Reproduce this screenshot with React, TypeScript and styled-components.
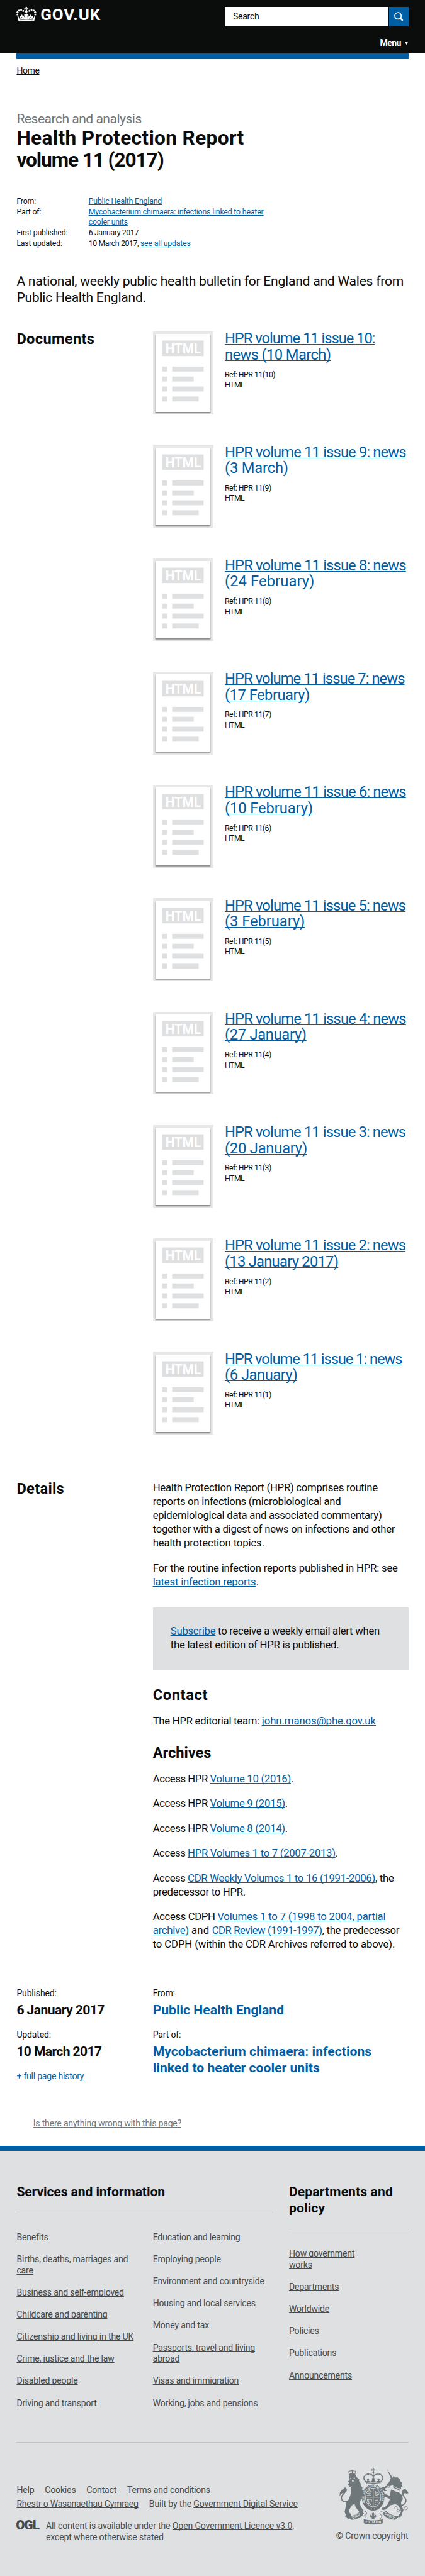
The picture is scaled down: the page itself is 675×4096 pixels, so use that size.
import React from "react";
import styled, { createGlobalStyle, css } from "styled-components";

const colour = {
  ink: "#0b0c0c",
  link: "#005ea5",
  secondary: "#6f777b",
  panel: "#dee0e2",
  footerText: "#454a4c",
  rule: "#bfc1c3",
};

/* 1rem is ten design units */
const GlobalStyle = createGlobalStyle`
  *, *::before, *::after { box-sizing: border-box; }
  html { font-size: 8.793px; }
  body { margin: 0; background: #fff; color: ${colour.ink}; font-family: Roboto, "Liberation Sans", sans-serif; overflow-x: hidden; }
  h1, h2, h3, p, ul, dl, dd, dt { margin: 0; padding: 0; font-weight: 400; }
  ul { list-style: none; }
`;

const type = (size: number, line: number, weight = 400, tracking = 0) => css`
  font-size: ${size}rem;
  line-height: ${line}rem;
  font-weight: ${weight};
  letter-spacing: ${tracking}em;
  white-space: nowrap;
`;

const Page = styled.div`
  min-height: 100vh;
  display: flex;
  flex-direction: column;
`;

const Link = styled.a<{ $tone?: string; $tracking?: number }>`
  color: ${(p) => p.$tone ?? colour.link};
  letter-spacing: ${(p) => (p.$tracking === undefined ? "inherit" : `${p.$tracking}em`)};
  text-decoration: underline;
  text-decoration-thickness: 1px;
  text-underline-offset: 1px;
  text-decoration-skip-ink: none;
`;

const Tracked = styled.span<{ $tracking: number }>`
  letter-spacing: ${(p) => p.$tracking}em;
`;

/* ---------- header ---------- */

const Header = styled.header`
  height: 9.7rem;
  padding: 1.2rem 3rem 0;
  background: ${colour.ink};
  color: #fff;
`;
const HeaderRow = styled.div`
  display: flex;
  justify-content: space-between;
  align-items: flex-start;
`;
const Logo = styled.div`
  display: flex;
  gap: 0.7rem;
  font-size: 2.95rem;
  line-height: 2.6rem;
  font-weight: 700;
  letter-spacing: 0.035em;
  svg { width: 3.6rem; height: 2.6rem; }
  span { margin-top: 0.18rem; }
`;
const Search = styled.form`
  display: flex;
  gap: 0.1rem;
`;
const SearchField = styled.div`
  ${type(1.6, 3.6, 400, -0.0172)}
  width: 29.6rem;
  padding-left: 1.5rem;
  background: #fff;
  color: ${colour.ink};
`;
const SearchButton = styled.button`
  width: 3.5rem;
  height: 3.6rem;
  padding: 0;
  border: 0;
  background: ${colour.link};
  display: grid;
  place-items: center;
  svg { width: 1.7rem; height: 1.7rem; }
`;
const MenuToggle = styled.div`
  ${type(1.6, 2, 700, -0.04)}
  margin-top: 2.02rem;
  display: flex;
  justify-content: flex-end;
  align-items: center;
  gap: 0.75rem;
  svg { width: 0.6rem; height: 0.6rem; }
`;

/* ---------- main ---------- */

const Main = styled.main`
  padding: 0 3rem;
`;
const BlueBar = styled.div`
  height: 1rem;
  background: ${colour.link};
`;
const Breadcrumb = styled.nav`
  ${type(1.6, 2, 400, -0.03)}
  margin-top: 1.13rem;
`;
const Context = styled.p`
  ${type(2.4, 3, 400, -0.0248)}
  margin-top: 6.23rem;
  color: ${colour.secondary};
`;
const Title = styled.h1`
  ${type(3.6, 3.9, 700, 0.0105)}
  padding-top: 0.06rem;
`;
const Meta = styled.dl`
  ${type(1.4, 1.9, 400, -0.0133)}
  margin-top: 4.57rem;
  display: grid;
  grid-template-columns: 13rem 1fr;
`;
const Lead = styled.p`
  ${type(2.4, 3, 400, -0.012)}
  margin-top: 4.34rem;
`;
const Section = styled.section<{ $gap: number }>`
  margin-top: ${(p) => p.$gap}rem;
  display: grid;
  grid-template-columns: 21.6rem 46.2rem;
  column-gap: 3rem;
`;
const SectionHeading = styled.h2`
  ${type(2.7, 2.5, 700, 0.012)}
  padding-top: 0.06rem;
`;
const DocumentList = styled.ul`
  display: flex;
  flex-direction: column;
  gap: 5.5rem;
`;
const DocumentItem = styled.li`
  height: 15rem;
  display: flex;
  gap: 2.1rem;
`;
const Thumbnail = styled.div`
  flex: none;
  width: 10.9rem;
  height: 15rem;
  padding: 0.5rem;
  background: #e7e7e7;
  svg {
    display: block;
    width: 9.9rem;
    height: 14rem;
    background: #fff;
    box-shadow: 0 0.2rem 0.2rem rgba(0, 0, 0, 0.4);
  }
`;
const DocumentTitle = styled.h3`
  ${type(2.7, 2.9)}
  margin-top: -0.07rem;
`;
const DocumentMeta = styled.p`
  ${type(1.4, 1.9, 400, -0.041)}
  margin-top: 1.15rem;
`;
const Prose = styled.div`
  p { ${type(1.9, 2.5, 400, -0.0155)} }
  p + p { margin-top: 2rem; }
`;
const ProseHeading = styled.h3<{ $tracking: number }>`
  ${type(2.7, 3, 700)}
  margin: 2.99rem 0 1.97rem;
  letter-spacing: ${(p) => p.$tracking}em;
`;
const CallToAction = styled.div`
  height: 11.4rem;
  margin-top: 3.25rem;
  padding: 3.12rem 3.2rem 0;
  background: ${colour.panel};
`;
const Facts = styled.div`
  margin-top: 6.58rem;
  display: grid;
  grid-template-columns: 21.6rem 46.2rem;
  column-gap: 3rem;
`;
const FactColumn = styled.div`
  display: flex;
  flex-direction: column;
  gap: 2.07rem;
`;
const FactLabel = styled.p`
  ${type(1.6, 2, 400, -0.012)}
`;
const FactValue = styled.p<{ $linked?: boolean; $tracking?: number }>`
  ${type(2.4, 3, 700)}
  margin-top: 0.43rem;
  letter-spacing: ${(p) => p.$tracking ?? 0}em;
  color: ${(p) => (p.$linked ? colour.link : colour.ink)};
`;
const Report = styled.p`
  ${type(1.6, 2, 400, -0.0139)}
  margin: 6.5rem 0 3.03rem 3rem;
`;

/* ---------- footer ---------- */

const Footer = styled.footer`
  flex: 1;
  padding: 5.9rem 3rem 0;
  border-top: 1rem solid ${colour.link};
  background: ${colour.panel};
  color: ${colour.footerText};
`;
const FooterNav = styled.div`
  display: grid;
  grid-template-columns: 46.2rem 21.6rem;
  column-gap: 3rem;
  padding-bottom: 6.05rem;
  border-bottom: 1px solid ${colour.rule};
`;
const FooterHeading = styled.h2<{ $tracking: number }>`
  ${type(2.4, 3, 700)}
  letter-spacing: ${(p) => p.$tracking}em;
  padding-bottom: 2.15rem;
  border-bottom: 1px solid ${colour.rule};
  color: ${colour.ink};
`;
const FooterColumns = styled.div`
  margin-top: 3.48rem;
  display: grid;
  grid-template-columns: 21.6rem 21.6rem;
  column-gap: 3rem;
`;
const FooterList = styled.ul`
  ${type(1.6, 2, 400, -0.0122)}
  display: flex;
  flex-direction: column;
  gap: 2rem;
`;
const FooterBottom = styled.div`
  margin-top: 4.52rem;
  display: flex;
  justify-content: space-between;
`;
const Legal = styled.div`
  padding-top: 2.88rem;
`;
const LegalLinks = styled.div<{ $gap: number }>`
  ${type(1.6, 2.4, 400, -0.0115)}
  display: flex;
  gap: ${(p) => p.$gap}rem;
`;
const Licence = styled.div`
  ${type(1.6, 2, 400, -0.0096)}
  margin-top: 1.86rem;
  display: flex;
  gap: 1.2rem;
  svg { width: 4.1rem; height: 1.8rem; overflow: visible; }
`;
const Copyright = styled.div`
  ${type(1.6, 2, 400, -0.0062)}
  display: flex;
  flex-direction: column;
  align-items: flex-end;
  gap: 1.18rem;
  svg { width: 12.5rem; height: 10.2rem; overflow: visible; }
`;

/* ---------- drawings ---------- */

const crownPearls = [[1.9, 13.6], [2.1, 9.4], [4.7, 6.5], [8.6, 5.4], [12.4, 7.2]];

const Crown = () => (
  <svg viewBox="0 0 36 26" fill="#fff">
    {crownPearls.map(([x, y]) => (
      <React.Fragment key={y}>
        <circle cx={x} cy={y} r="1.75" />
        <circle cx={36 - x} cy={y} r="1.75" />
      </React.Fragment>
    ))}
    <path d="M16.6 0h2.8l-.5 2.7 2.7-.6v2.9l-2.7-.5.5 2.2h-2.8l.5-2.2-2.7.5V2.1l2.7.6z" />
    <circle cx="18" cy="8.6" r="2.2" />
    <path d="M1.6 16l2.4 1.5 1.6 4.4h24.8l1.6-4.4 2.4-1.5-2.4 10H4z" />
    <path d="M18 10.5l1.5 3.2 2.3-1.2v3.5l-2.1-.5.8 4.3 2.6-4.1 1 1.9 1.9-4.4 1.7 3.9 2.3-1.6-1.1 7.8H7.1L6 15.5l2.3 1.6L10 13.2l1.9 4.4 1-1.9 2.6 4.1.8-4.3-2.1.5v-3.5l2.3 1.2z" />
    <path d="M6.4 23.7q11.6-1.8 23.2 0" stroke={colour.ink} strokeWidth=".6" fill="none" />
    <path d="M7.6 21l2.3-2.4 2.3 2.4M23.8 21l2.3-2.4 2.3 2.4M15 21l1.4-1.2h3.2l1.4 1.2" stroke={colour.ink} strokeWidth=".9" fill="none" />
  </svg>
);

const SearchGlyph = () => (
  <svg viewBox="0 0 17 17" fill="none" stroke="#fff">
    <circle cx="7" cy="7" r="5.9" strokeWidth="1.9" />
    <path d="M11 11.2l4.6 4.6" strokeWidth="2.8" />
  </svg>
);

const HtmlPage = () => (
  <svg viewBox="0 0 99 140" fill={colour.panel}>
    <rect x="12" y="12" width="75" height="28" />
    <text x="18" y="34.8" fill="#fff" fontFamily="Roboto, sans-serif" fontSize="24.5" fontWeight="700" textLength="64" lengthAdjust="spacingAndGlyphs">
      HTML
    </text>
    {[57, 39, 57, 48].map((w, i) => (
      <React.Fragment key={i}>
        <rect x="12" y={59 + i * 18} width="9" height="9" />
        <rect x="30" y={59 + i * 18} width={w} height="9" />
      </React.Fragment>
    ))}
  </svg>
);

const Crest = () => (
  <svg viewBox="15 24 375 306" fill={colour.secondary} fontFamily="Roboto, sans-serif" fontWeight="700">
    {/* lion */}
    <path d="M70 61l-4-13q-2-7 8-6l11-5 11 5q9-1 7 6l-4 13z" fill="none" stroke={colour.secondary} strokeWidth="5" strokeDasharray="5 1.5" />
    <path d="M83 36h4v24h-4zM71 54h28v7H71z" />
    <path d="M68 66l34-4 8 14 14 12-3 8 12 16-5 5 13 15-4 6 8 14-3 15 8 12-10 14-8 2-8 21 10 22 10 16-4 9 5 10-10-2-9 5-5-15-18-24-6-18-13 8-14 21-2 17 10 11 2 13 8 9-9 4-8-3-10 4-6-11-9-4 4-10-7-14 5-21 3-28 16-22 12-34-2-27 5-9-10 4-8-4 6-5-8-2 5-12-5-7 9-8z" />
    <path d="M73 78l8 3-6 4zM91 80l9-3-2 8zM83 93l12-4-3 9-7 2z" fill={colour.panel} />
    <path d="M59 205c-16 10-36-2-32-24 3-18 25-20 23-38" fill="none" stroke={colour.secondary} strokeWidth="6" />
    <path d="M46 130l10 8-2 14-12 8-14 3-12 14 2-20 10-13z" />
    {/* unicorn */}
    <path d="M273 31l31 48-8 7z" />
    <path d="M292 84l13-7 3-10 7 9 16 0 13 11 1 9 10 10-4 7 6 12-8 3 1 12-10-6 2 16-12-8-22-10-4-14-14 5-14-1-3-9 12-12z" />
    <path d="M296 141l42 17 17 14 4 22-10 18 4 20 9 20-6 18-6 17-11 6-2-12 11-15 1-12-14-25-17-8-25 6-25 22-15 4-11-3 5-9 15-3 17-19 10-26-19-9-19-2-17-15 1-9 19-4 8 12 25 9z" />
    <path d="M269 121l-10 7-14-1-5 9 19 15 13-2-12-11 13-8z" />
    <path d="M352 228c27-9 30-29 16-44-16-17-9-38 7-44" fill="none" stroke={colour.secondary} strokeWidth="6" />
    <path d="M364 138l-8 12 2 22 12-12 8 4 12-3-10-16z" />
    <path d="M298 116q22 20 52 23M292 134q22 20 50 22" stroke={colour.panel} strokeWidth="3" fill="none" />
    <g fill="none" stroke={colour.secondary} strokeWidth="3">
      <circle cx="281" cy="125" r="6" />
      <circle cx="322" cy="241" r="7" />
      <circle cx="334" cy="256" r="7" />
      <circle cx="354" cy="255" r="6" />
      <circle cx="375" cy="243" r="9" />
    </g>
    {/* crown */}
    <path d="M195 25h8l-2 8 8-2v9l-8-2 3 13h-10l3-13-8 2v-9l8 2z" />
    <path d="M160 101C132 72 160 45 195 65q4 5 8 0C238 45 266 72 238 101" fill="none" stroke={colour.secondary} strokeWidth="7" strokeDasharray="6 1.5" />
    <path d="M199 53v46" stroke={colour.secondary} strokeWidth="5" strokeDasharray="5 2" />
    <path d="M159 101l8-7-3-8 7-6 6 7-3 8 11 4 9-8-3-8 8-8 8 8-3 8 9 8 11-4-3-8 6-7 7 6-3 8 8 7-2 12q-37-8-77 0z" />
    <path d="M164 107q35-8 70 0" fill="none" stroke={colour.panel} strokeWidth="2.5" />
    {/* garter and shield */}
    <ellipse cx="198" cy="185" rx="61" ry="71" />
    <ellipse cx="198" cy="185" rx="42" ry="51" fill="none" stroke={colour.panel} strokeWidth="3" />
    <path d="M158 183h80M198 135v100" stroke={colour.panel} strokeWidth="4" />
    <g fill="none" stroke={colour.panel} strokeWidth="3">
      <path d="M168 153l8-4 14 3M164 163l13-2 12 4M164 174l12-3 13 4" />
      <path d="M207 202l12-4 9 5M207 213l10-4 10 5M207 224l12-4" />
      <path d="M209 151l6 10 10-4 4 11-8 6-11-4zM211 175l14-8" />
      <path d="M166 194l4 20 16 11 4-29zM172 196l4 22M180 196l1 24" />
    </g>
    <path id="garter" d="M157 212a47 56 0 1 1 82 0" fill="none" />
    <text fontSize="16" fill={colour.panel}>
      <textPath href="#garter">HONI SOIT QUI MAL Y PENSE</textPath>
    </text>
    <circle cx="189" cy="247" r="3" fill={colour.panel} />
    <circle cx="206" cy="247" r="3" fill={colour.panel} />
    {/* fleur-de-lis and motto scroll */}
    <path d="M198 263l7 12-3 10 9-7 5 9-8 7-5-2 4 11h-18l4-11-5 2-8-7 5-9 9 7-3-10z" />
    <path d="M60 287q42 0 72-31l17 16q-21 30-69 34z" />
    <path d="M338 287q-42 0-72-31l-17 16q21 30 69 34z" />
    <path d="M147 303q51 13 103 0v22q-51 13-103 0z" />
    <path d="M133 257q28-2 31 14 0 10-13 11 3 13 12 20M265 257q-28-2-31 14 0 10 13 11-3 13-12 20" fill="none" stroke={colour.secondary} strokeWidth="3" />
    <g fontSize="19" fill={colour.panel}>
      <text transform="translate(88 301) rotate(-27)" textLength="45">DIEU</text>
      <text x="157" y="325" textLength="84">ET MON</text>
      <text transform="translate(258 276) rotate(28)" textLength="58">DROIT</text>
    </g>
  </svg>
);

/* ---------- content ---------- */

type Line = [text: string, tracking: number];

const documents: { ref: number; lines: Line[] }[] = [
  { ref: 10, lines: [["HPR volume 11 issue 10:", -0.0435], ["news (10 March)", -0.0255]] },
  { ref: 9, lines: [["HPR volume 11 issue 9: news", -0.0355], ["(3 March)", -0.0075]] },
  { ref: 8, lines: [["HPR volume 11 issue 8: news", -0.0355], ["(24 February)", 0.004]] },
  { ref: 7, lines: [["HPR volume 11 issue 7: news", -0.039], ["(17 February)", -0.021]] },
  { ref: 6, lines: [["HPR volume 11 issue 6: news", -0.0355], ["(10 February)", -0.004]] },
  { ref: 5, lines: [["HPR volume 11 issue 5: news", -0.0365], ["(3 February)", -0.002]] },
  { ref: 4, lines: [["HPR volume 11 issue 4: news", -0.0355], ["(27 January)", -0.013]] },
  { ref: 3, lines: [["HPR volume 11 issue 3: news", -0.0365], ["(20 January)", -0.009]] },
  { ref: 2, lines: [["HPR volume 11 issue 2: news", -0.0365], ["(13 January 2017)", -0.031]] },
  { ref: 1, lines: [["HPR volume 11 issue 1: news", -0.0455], ["(6 January)", -0.0189]] },
];

const services = [
  [
    ["Benefits"],
    ["Births, deaths, marriages and", "care"],
    ["Business and self-employed"],
    ["Childcare and parenting"],
    ["Citizenship and living in the UK"],
    ["Crime, justice and the law"],
    ["Disabled people"],
    ["Driving and transport"],
  ],
  [
    ["Education and learning"],
    ["Employing people"],
    ["Environment and countryside"],
    ["Housing and local services"],
    ["Money and tax"],
    ["Passports, travel and living", "abroad"],
    ["Visas and immigration"],
    ["Working, jobs and pensions"],
  ],
];

const departments = [
  ["How government", "works"],
  ["Departments"],
  ["Worldwide"],
  ["Policies"],
  ["Publications"],
  ["Announcements"],
];

const LinkList = ({ items }: { items: string[][] }) => (
  <FooterList>
    {items.map((lines) => (
      <li key={lines[0]}>
        <Link $tone={colour.footerText}>
          {lines[0]}
          {lines[1] && <><br />{lines[1]}</>}
        </Link>
      </li>
    ))}
  </FooterList>
);

export default function App() {
  return (
    <Page>
      <GlobalStyle />
      <Header>
        <HeaderRow>
          <Logo><Crown /><span>GOV.UK</span></Logo>
          <Search>
            <SearchField>Search</SearchField>
            <SearchButton type="button" aria-label="Search"><SearchGlyph /></SearchButton>
          </Search>
        </HeaderRow>
        <MenuToggle>
          Menu
          <svg viewBox="0 0 6 6" fill="#fff"><path d="M0 0h6L3 6z" /></svg>
        </MenuToggle>
      </Header>

      <Main>
        <BlueBar />
        <Breadcrumb><Link $tone={colour.ink}>Home</Link></Breadcrumb>
        <Context>Research and analysis</Context>
        <Title>
          Health Protection Report<br />
          <Tracked $tracking={-0.035}>volume 11 (2017)</Tracked>
        </Title>
        <Meta>
          <dt>From:</dt>
          <dd><Link>Public Health England</Link></dd>
          <dt>Part of:</dt>
          <dd><Link>Mycobacterium chimaera: infections linked to heater<br />cooler units</Link></dd>
          <dt>First published:</dt>
          <dd><Tracked $tracking={-0.03}>6 January 2017</Tracked></dd>
          <dt>Last updated:</dt>
          <dd><Tracked $tracking={-0.03}>10 March 2017, </Tracked><Link>see all updates</Link></dd>
        </Meta>
        <Lead>
          A national, weekly public health bulletin for England and Wales from<br />
          Public Health England.
        </Lead>

        <Section $gap={4.62}>
          <SectionHeading>Documents</SectionHeading>
          <DocumentList>
            {documents.map(({ ref, lines: [first, second] }) => (
              <DocumentItem key={ref}>
                <Thumbnail><HtmlPage /></Thumbnail>
                <div>
                  <DocumentTitle>
                    <Link $tracking={first[1]}>{first[0]}</Link><br />
                    <Link $tracking={second[1]}>{second[0]}</Link>
                  </DocumentTitle>
                  <DocumentMeta>Ref: HPR 11({ref})<br />HTML</DocumentMeta>
                </div>
              </DocumentItem>
            ))}
          </DocumentList>
        </Section>

        <Section $gap={8.45}>
          <SectionHeading>Details</SectionHeading>
          <Prose>
            <p>
              Health Protection Report (HPR) comprises routine<br />
              reports on infections (microbiological and<br />
              epidemiological data and associated commentary)<br />
              together with a digest of news on infections and other<br />
              <Tracked $tracking={-0.006}>health protection topics.</Tracked>
            </p>
            <p>
              <Tracked $tracking={-0.011}>For the routine infection reports published in HPR: see</Tracked><br />
              <Link $tracking={-0.01}>latest infection reports</Link>.
            </p>
            <CallToAction>
              <p>
                <Link>Subscribe</Link> to receive a weekly email alert when<br />
                the latest edition of HPR is published.
              </p>
            </CallToAction>
            <ProseHeading $tracking={0.024}>Contact</ProseHeading>
            <p>The HPR editorial team: <Link $tracking={-0.003}>john.manos@phe.gov.uk</Link></p>
            <ProseHeading $tracking={-0.003}>Archives</ProseHeading>
            <p><Tracked $tracking={-0.025}>Access HPR </Tracked><Link>Volume 10 (2016)</Link>.</p>
            <p><Tracked $tracking={-0.025}>Access HPR </Tracked><Link>Volume 9 (2015)</Link>.</p>
            <p><Tracked $tracking={-0.025}>Access HPR </Tracked><Link>Volume 8 (2014)</Link>.</p>
            <p><Tracked $tracking={-0.027}>Access </Tracked><Link $tracking={-0.0173}>HPR Volumes 1 to 7 (2007-2013)</Link>.</p>
            <p>
              <Tracked $tracking={-0.027}>Access </Tracked>
              <Link $tracking={-0.0173}>CDR Weekly Volumes 1 to 16 (1991-2006)</Link>, the<br />
              predecessor to HPR.
            </p>
            <p>
              <Tracked $tracking={-0.022}>Access CDPH </Tracked>
              <Link $tracking={-0.0105}>Volumes 1 to 7 (1998 to 2004, partial</Link><br />
              <Link>archive)</Link><Tracked $tracking={0.01}> and </Tracked>
              <Link $tracking={-0.025}>CDR Review (1991-1997)</Link>, the predecessor<br />
              <Tracked $tracking={-0.006}>to CDPH (within the CDR Archives referred to above).</Tracked>
            </p>
          </Prose>
        </Section>

        <Facts>
          <FactColumn>
            <div>
              <FactLabel>Published:</FactLabel>
              <FactValue $tracking={-0.0272}>6 January 2017</FactValue>
            </div>
            <div>
              <FactLabel>Updated:</FactLabel>
              <FactValue $tracking={-0.03}>10 March 2017</FactValue>
            </div>
            <FactLabel><Link $tracking={-0.016}>+ full page history</Link></FactLabel>
          </FactColumn>
          <FactColumn>
            <div>
              <FactLabel>From:</FactLabel>
              <FactValue $linked>Public Health England</FactValue>
            </div>
            <div>
              <FactLabel>Part of:</FactLabel>
              <FactValue $linked $tracking={0.001}>Mycobacterium chimaera: infections<br />linked to heater cooler units</FactValue>
            </div>
          </FactColumn>
        </Facts>
        <Report><Link $tone={colour.secondary}>Is there anything wrong with this page?</Link></Report>
      </Main>

      <Footer>
        <FooterNav>
          <div>
            <FooterHeading $tracking={-0.0045}>Services and information</FooterHeading>
            <FooterColumns>
              {services.map((items) => <LinkList key={items[0][0]} items={items} />)}
            </FooterColumns>
          </div>
          <div>
            <FooterHeading $tracking={0.005}>Departments and<br />policy</FooterHeading>
            <FooterColumns><LinkList items={departments} /></FooterColumns>
          </div>
        </FooterNav>
        <FooterBottom>
          <Legal>
            <LegalLinks $gap={1.9}>
              {["Help", "Cookies", "Contact", "Terms and conditions"].map((label) => (
                <Link key={label} $tone={colour.footerText}>{label}</Link>
              ))}
            </LegalLinks>
            <LegalLinks $gap={1.95}>
              <Link $tone={colour.footerText} $tracking={-0.0165}>Rhestr o Wasanaethau Cymraeg</Link>
              <span>Built by the <Link $tone={colour.footerText} $tracking={-0.0085}>Government Digital Service</Link></span>
            </LegalLinks>
            <Licence>
              <svg viewBox="0 0 41 18" fill={colour.footerText}>
                <text x="-1" y="16" fontFamily="Roboto, sans-serif" fontSize="23.5" fontWeight="900" textLength="43">OGL</text>
              </svg>
              <p>
                All content is available under the <Link $tone={colour.footerText}>Open Government Licence v3.0</Link>,<br />
                except where otherwise stated
              </p>
            </Licence>
          </Legal>
          <Copyright><Crest />© Crown copyright</Copyright>
        </FooterBottom>
      </Footer>
    </Page>
  );
}
